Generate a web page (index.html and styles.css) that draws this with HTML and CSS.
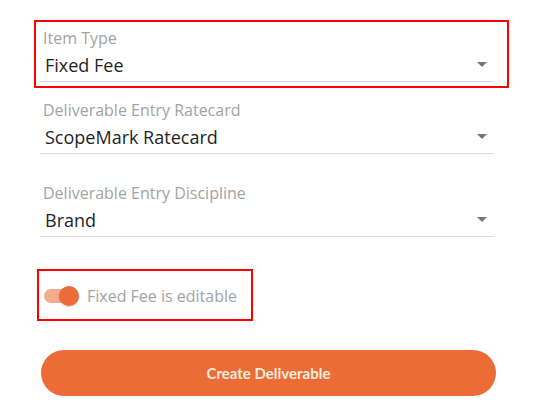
FILE: index.html
```html
<!DOCTYPE html>
<html lang="en">
<head>
  <meta charset="UTF-8" />
  <meta name="viewport" content="width=device-width, initial-scale=1.0" />
  <title>Create Deliverable</title>
  <link rel="stylesheet" href="styles.css">
</head>
<body>
  <form class="deliverable-form">
    <div class="field highlight">
      <label class="field-label">Item Type</label>
      <div class="select">
        <span class="select-value">Fixed Fee</span>
        <span class="select-arrow"></span>
      </div>
    </div>

    <div class="field field-ratecard">
      <label class="field-label">Deliverable Entry Ratecard</label>
      <div class="select">
        <span class="select-value">ScopeMark Ratecard</span>
        <span class="select-arrow"></span>
      </div>
    </div>

    <div class="field field-discipline">
      <label class="field-label">Deliverable Entry Discipline</label>
      <div class="select">
        <span class="select-value">Brand</span>
        <span class="select-arrow"></span>
      </div>
    </div>

    <div class="toggle-row">
      <span class="switch">
        <span class="switch-track"></span>
        <span class="switch-thumb"></span>
      </span>
      <span class="toggle-label">Fixed Fee is editable</span>
    </div>

    <button type="button" class="create-btn">Create Deliverable</button>
  </form>
</body>
</html>
```

FILE: styles.css
```css
:root {
  --accent: #ec6b37;
  --accent-light: #f4ab8c;
  --label: #a3a3a3;
  --text: #1f1f1f;
  --line: #dcdcdc;
  --mark: #ff0000;
}

* {
  box-sizing: border-box;
  margin: 0;
  padding: 0;
}

body {
  background: #fff;
  font-family: "Open Sans", "Noto Sans", sans-serif;
  color: var(--text);
}

.deliverable-form {
  display: flex;
  flex-direction: column;
  width: 455px;
  margin-left: 40px;
  padding-top: 28px;
}

.field {
  position: relative;
  width: 454px;
}

.field-ratecard {
  margin-top: 18px;
}

.field-discipline {
  margin-top: 29px;
}

.field-label {
  display: block;
  font-size: 16px;
  line-height: 20px;
  color: var(--label);
  padding-left: 3px;
}

.select {
  display: flex;
  align-items: center;
  justify-content: space-between;
  margin-top: 5px;
  padding: 0 7px 4px 5px;
  border-bottom: 1px solid var(--line);
}

.select-value {
  font-size: 18px;
  line-height: 24px;
}

.select-arrow {
  width: 0;
  height: 0;
  border-left: 5px solid transparent;
  border-right: 5px solid transparent;
  border-top: 5px solid #757575;
  margin-top: -1px;
}

/* red annotation boxes from the screenshot */
.highlight::after {
  content: "";
  position: absolute;
  left: -6px;
  right: -15px;
  top: -8px;
  bottom: -6px;
  border: 2px solid var(--mark);
  pointer-events: none;
}

.toggle-row {
  position: relative;
  display: flex;
  align-items: center;
  gap: 9px;
  height: 24px;
  margin-top: 47px;
  padding-left: 4px;
}

.toggle-row::after {
  content: "";
  position: absolute;
  left: -3px;
  top: -15px;
  width: 212px;
  height: 48px;
  border: 2px solid var(--mark);
  pointer-events: none;
}

.switch {
  position: relative;
  width: 34px;
  height: 20px;
  display: flex;
  align-items: center;
}

.switch-track {
  width: 34px;
  height: 14px;
  border-radius: 7px;
  background: var(--accent-light);
}

.switch-thumb {
  position: absolute;
  right: -1px;
  top: 0;
  width: 20px;
  height: 20px;
  border-radius: 50%;
  background: var(--accent);
  box-shadow: 0 1px 2px rgba(0, 0, 0, 0.2);
}

.toggle-label {
  font-size: 16px;
  color: var(--label);
}

.create-btn {
  margin-top: 42px;
  width: 455px;
  height: 46px;
  margin-left: 1px;
  border: none;
  border-radius: 23px;
  background: var(--accent);
  color: #fdeedd;
  font-family: "Lato", "Open Sans", sans-serif;
  font-weight: bold;
  font-size: 15px;
  cursor: pointer;
}
```
